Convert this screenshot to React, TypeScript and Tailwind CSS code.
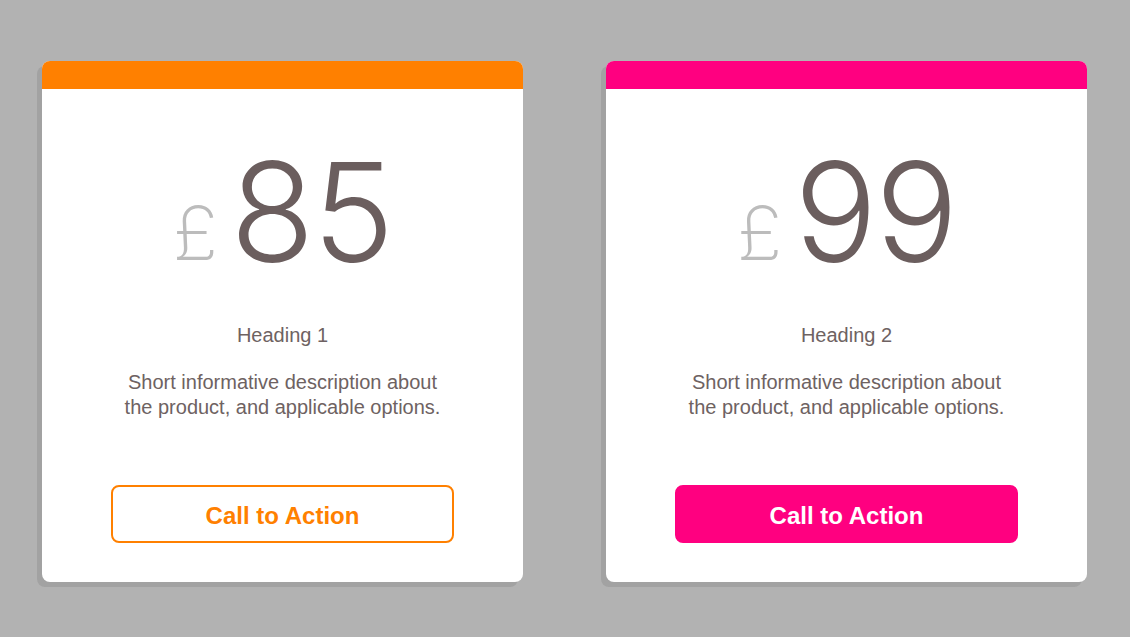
import React from "react";

type Plan = {
  price: string;
  heading: string;
  accent: "orange" | "pink";
  filled: boolean;
};

const plans: Plan[] = [
  { price: "85", heading: "Heading 1", accent: "orange", filled: false },
  { price: "99", heading: "Heading 2", accent: "pink", filled: true },
];

function PriceCard({ price, heading, accent, filled }: Plan) {
  const bar = accent === "orange" ? "bg-[#ff8000]" : "bg-[#ff0080]";
  const button = filled
    ? "bg-[#ff0080] border-[#ff0080] text-white"
    : "bg-white border-[#ff8000] text-[#ff8000]";

  return (
    <div className="flex h-[521px] w-[481px] flex-col overflow-hidden rounded-[8px] bg-white shadow-[-5px_5px_0_#a2a2a2]">
      <div className={`h-[28px] ${bar}`} />
      <div className="flex flex-1 flex-col items-center">
        <div className="mt-[62px] flex h-[130px] items-end gap-[12px]">
          <span className="mb-[11px] font-['Inter'] text-[76px] font-extralight leading-none text-[#bcbcbc]">
            £
          </span>
          <span className="font-['Inter'] text-[138px] font-light leading-none tracking-[-2px] text-[#6b5e5e]">
            {price}
          </span>
        </div>
        <h2 className="mt-[42px] font-['Liberation_Sans'] text-[20px] leading-[25px] text-[#6e6262]">
          {heading}
        </h2>
        <p className="mt-[22px] text-center font-['Liberation_Sans'] text-[20px] leading-[25px] text-[#6e6262]">
          Short informative description about
          <br />
          the product, and applicable options.
        </p>
        <button
          className={`mt-auto mb-[39px] h-[58px] w-[343px] rounded-[8px] border-2 pt-[3px] font-['Liberation_Sans'] text-[24px] font-bold ${button}`}
        >
          Call to Action
        </button>
      </div>
    </div>
  );
}

export default function App() {
  return (
    <div className="flex h-[637px] w-full gap-[83px] bg-[#b2b2b2] pt-[61px] pl-[42px]">
      {plans.map((p) => (
        <PriceCard key={p.heading} {...p} />
      ))}
    </div>
  );
}
